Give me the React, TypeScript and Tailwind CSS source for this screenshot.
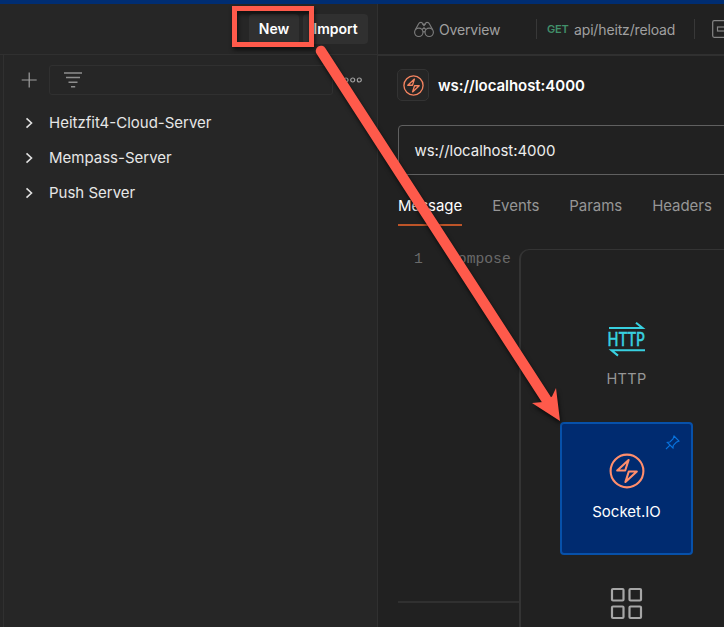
import type { ReactNode } from "react";

const collections = ["Heitzfit4-Cloud-Server", "Mempass-Server", "Push Server"];

function SocketIcon({ size, color, stroke }: { size: number; color: string; stroke: number }) {
  return (
    <svg width={size} height={size} viewBox="0 0 36 36" fill="none" stroke={color} strokeWidth={stroke} strokeLinejoin="round">
      <circle cx="18" cy="18" r="16.4" />
      <path d="M19.6 7 8.2 17.5H16.2Z" />
      <path d="M16.4 29 27.8 18.5H19.8Z" />
    </svg>
  );
}

function HttpIcon() {
  return (
    <svg className="shrink-0 overflow-visible" width="38" height="36" viewBox="0 0 38 36" fill="none" stroke="#38d0e0" strokeWidth="2.1">
      <path d="M1 6H34.5L28 0.8" />
      <path d="M37 28.2H3.5L10 33.6" />
      <text x="-0.5" y="24" textLength="37.5" lengthAdjust="spacingAndGlyphs" fill="#38d0e0" stroke="#38d0e0" strokeWidth="0.5" className="font-['Lato',sans-serif] text-[19px] leading-[24px] font-medium">HTTP</text>
    </svg>
  );
}

function Binoculars() {
  return (
    <svg className="shrink-0" width="20" height="17" viewBox="0 0 20 17" fill="none" stroke="#7c7c7c" strokeWidth="1.15">
      <circle cx="4.8" cy="11.3" r="4.2" />
      <circle cx="15.2" cy="11.3" r="4.2" />
      <path d="M1.2 9 4.5 3Q5.2 1.3 7 1.3Q8.4 1.3 8.6 3H11.4Q11.6 1.3 13 1.3Q14.8 1.3 15.5 3L18.8 9M8.1 8.5 10 6.8 11.9 8.5M8.6 3 10 4.6 11.4 3M9 11.3Q10 9.8 11 11.3" />
    </svg>
  );
}

function HeaderButton({ children, className }: { children: ReactNode; className: string }) {
  return (
    <button className={`flex h-[30px] items-center justify-center rounded-[4px] bg-[#303030] text-[14px] font-semibold text-white ${className}`}>
      {children}
    </button>
  );
}

function Sidebar() {
  return (
    <aside className="flex w-[378px] shrink-0 flex-col border-r border-[#303030] bg-[#262626]">
      <header className="flex h-[51px] shrink-0 items-center justify-end gap-1 border-b border-[#303030] pr-[9px] pb-px">
        <HeaderButton className="w-[50px]">New</HeaderButton>
        <HeaderButton className="w-[65px]">Import</HeaderButton>
      </header>
      <div className="ml-[3px] flex-1 border-l border-[#303030] pt-[10px]">
        <div className="flex h-[30px] items-center">
          <svg className="ml-[17px]" width="16" height="16" viewBox="0 0 16 16" stroke="#a0a0a0" strokeWidth="1.2">
            <path d="M8.2 .5V15.5M.7 8H15.7" />
          </svg>
          <div className="ml-[12px] flex h-[30px] w-[284px] items-center rounded-[3px] border border-[#303030] pl-[14px]">
            <svg width="18" height="18" viewBox="0 0 18 18" stroke="#8e8e8e" strokeWidth="1.4">
              <path d="M0 2H18M2 6.5H16M4.5 11.2H13.5M7 15.7H11.2" />
            </svg>
          </div>
          <svg className="ml-[10px]" width="20" height="8" viewBox="0 0 20 8" fill="none" stroke="#a0a0a0" strokeWidth="1.2">
            <circle cx="3" cy="4" r="2" /><circle cx="9.7" cy="4" r="2" /><circle cx="16.3" cy="4" r="2" />
          </svg>
        </div>
        <ul className="pt-[10px]">
          {collections.map((name) => (
            <li key={name} className="flex h-[35px] items-center text-[15px] text-[#e6e6e6]">
              <svg className="ml-[21px] mr-[16px]" width="8" height="12" viewBox="0 0 8 12" fill="none" stroke="#e0e0e0" strokeWidth="1.6">
                <path d="M1.5 1.3 6.5 6 1.5 10.7" />
              </svg>
              <span className="pt-[2px]">{name}</span>
            </li>
          ))}
        </ul>
      </div>
    </aside>
  );
}

function Workspace() {
  return (
    <main className="flex w-[346px] shrink-0 flex-col overflow-hidden bg-[#212121]">
      <nav className="flex h-[52px] shrink-0 items-center border-b-2 border-[#303030] pl-[36px] text-[14px] tracking-[-0.15px] text-[#a0a0a0]">
        <Binoculars />
        <span className="ml-[5px] w-[97px] shrink-0">Overview</span>
        <i className="h-5 w-px shrink-0 bg-[#383838]" />
        <span className="ml-[10px] w-[27px] shrink-0 pt-px text-[11px] font-semibold text-[#41906a]">GET</span>
        <span className="w-[120px] shrink-0 whitespace-nowrap">api/heitz/reload</span>
        <i className="h-5 w-px shrink-0 bg-[#383838]" />
        <svg className="ml-[17px] shrink-0" width="20" height="18" viewBox="0 0 20 18" fill="none" stroke="#858585" strokeWidth="1.2">
          <rect x=".7" y=".7" width="18" height="16.6" rx="1.5" /><rect x="5.5" y="7" width="9" height="4" />
        </svg>
      </nav>
      <div className="flex h-[69px] shrink-0 items-start pl-[19px] pt-[13px]">
        <div className="flex size-8 items-center justify-center rounded-[5px] border border-[#333] bg-[#252525]">
          <SocketIcon size={21} color="#f58460" stroke={2.3} />
        </div>
        <h1 className="ml-[9px] mt-[6px] text-[15px] leading-[22px] font-semibold tracking-[-0.05px] text-white">ws://localhost:4000</h1>
      </div>
      <div className="ml-5 flex h-[50px] w-[350px] shrink-0 items-center rounded-[4px] border border-[#606060] pt-[2px] pl-[15.5px] text-[15px] tracking-[-0.05px] text-[#ededed]">
        ws://localhost:4000
      </div>
      <div className="ml-5 flex h-[51px] shrink-0 items-start gap-[30px] text-[15px] tracking-[-0.05px] text-[#969696]">
        <span className="flex h-[51px] items-center border-b-2 border-[#bd5428] pt-[13px] text-white">Message</span>
        <span className="flex h-[51px] items-center pt-[11px]">Events</span>
        <span className="flex h-[51px] items-center pt-[11px]">Params</span>
        <span className="flex h-[51px] items-center pt-[11px]">Headers</span>
      </div>
      <div className="flex flex-1">
        <section className="ml-5 flex h-[377px] w-[121px] shrink-0 flex-col border-b-2 border-[#303030]">
          <div className="flex pt-[22px] pl-[16px] font-['Liberation_Mono',monospace] text-[14.7px] leading-[22px] text-[#6a6a6a]">
            <span className="w-[35px] shrink-0">1</span>
            <span>Compose</span>
          </div>
        </section>
        <RequestPicker />
      </div>
    </main>
  );
}

function RequestPicker() {
  return (
    <section className="mt-[23px] flex h-[390px] w-[250px] shrink-0 flex-col rounded-tl-[10px] border-t border-l-2 border-[#343434] bg-[#212121] pl-[39px]">
      <div className="flex h-[172px] w-[133px] shrink-0 flex-col items-center pt-[72px] text-[14.5px] tracking-[.3px] text-[#969696]">
        <HttpIcon />
        <span className="mt-[10px]">HTTP</span>
      </div>
      <div className="flex h-[133px] w-[133px] shrink-0 flex-col items-center rounded-[4px] border-2 border-[#0751aa] bg-[#002b70] text-[15px] text-white">
        <svg className="mt-[11px] mr-[11px] self-end" width="15" height="15" viewBox="0 0 15 15" fill="none" stroke="#0873de" strokeWidth="1.1">
          <path d="M9 1 14 6 11.3 7.3 8.3 10.4 8 13 2.3 7.3 4.9 7 8 3.9ZM5 10.2 1 14" />
        </svg>
        <div className="mt-[3px]"><SocketIcon size={36} color="#ff8e6c" stroke={2.1} /></div>
        <span className="mt-[12px]">Socket.IO</span>
      </div>
      <svg className="mt-[32px] ml-[50px] shrink-0" width="33" height="33" viewBox="0 0 33 33" fill="none" stroke="#a6a6a6" strokeWidth="2.2">
        <rect x="2" y="2" width="11.5" height="11.5" rx="1" /><rect x="19.5" y="2" width="11.5" height="11.5" rx="1" />
        <rect x="2" y="19.5" width="11.5" height="11.5" rx="1" /><rect x="19.5" y="19.5" width="11.5" height="11.5" rx="1" />
      </svg>
    </section>
  );
}

export default function App() {
  return (
    <div className="relative flex h-[627px] w-[724px] flex-col overflow-hidden bg-[#212121] font-[Inter,sans-serif]">
      <div className="h-1 shrink-0 bg-[#002d72]" />
      <div className="flex flex-1">
        <Sidebar />
        <Workspace />
      </div>
      <svg className="pointer-events-none absolute inset-0 drop-shadow-[1px_3px_2px_rgba(0,0,0,0.65)]" width="724" height="627" viewBox="0 0 724 627">
        <rect x="234.5" y="8.5" width="77" height="36" fill="none" stroke="#ff5a4b" strokeWidth="5" />
        <path d="M321 51 546 399" stroke="#ff5a4b" strokeWidth="10.5" strokeLinecap="round" />
        <path d="M560 421 532 403 543 402 552 396.5 556 388Z" fill="#ff5a4b" />
      </svg>
    </div>
  );
}
